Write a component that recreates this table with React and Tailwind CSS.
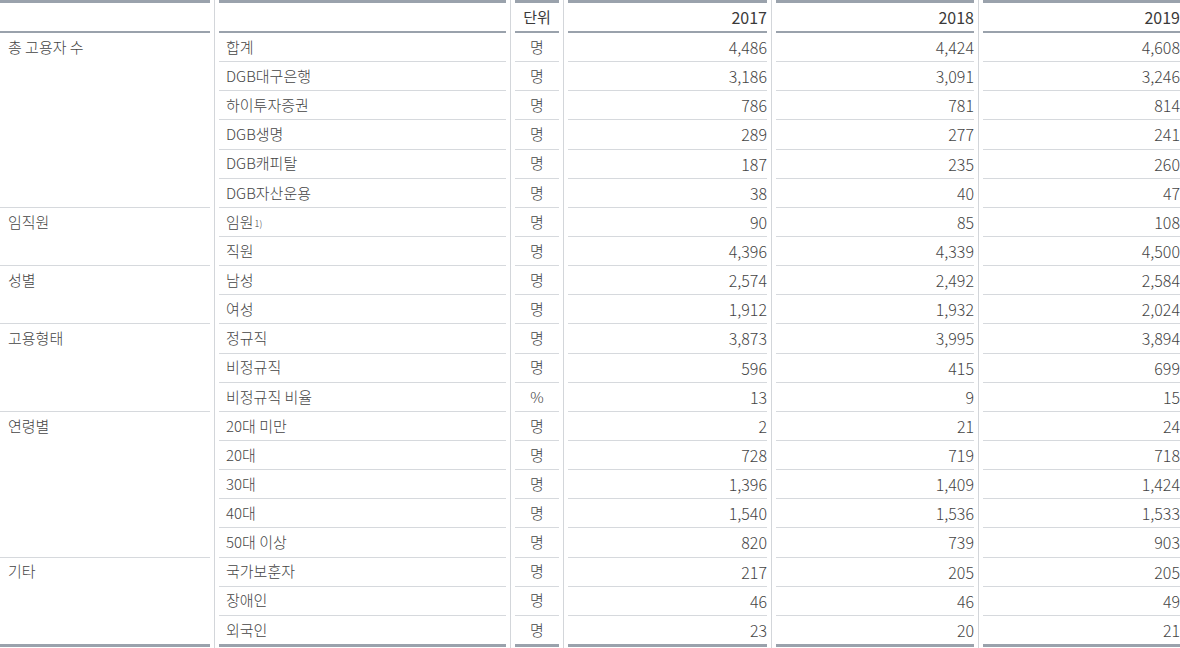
import React from "react";

const groups = [
  { name: "총 고용자 수", rows: ["합계", "DGB대구은행", "하이투자증권", "DGB생명", "DGB캐피탈", "DGB자산운용"] },
  { name: "임직원", rows: ["임원", "직원"] },
  { name: "성별", rows: ["남성", "여성"] },
  { name: "고용형태", rows: ["정규직", "비정규직", "비정규직 비율"] },
  { name: "연령별", rows: ["20대 미만", "20대", "30대", "40대", "50대 이상"] },
  { name: "기타", rows: ["국가보훈자", "장애인", "외국인"] },
];

const units = ["명","명","명","명","명","명","명","명","명","명","명","명","%","명","명","명","명","명","명","명","명"];
const y2017 = ["4,486","3,186","786","289","187","38","90","4,396","2,574","1,912","3,873","596","13","2","728","1,396","1,540","820","217","46","23"];
const y2018 = ["4,424","3,091","781","277","235","40","85","4,339","2,492","1,932","3,995","415","9","21","719","1,409","1,536","739","205","46","20"];
const y2019 = ["4,608","3,246","814","241","260","47","108","4,500","2,584","2,024","3,894","699","15","24","718","1,424","1,533","903","205","49","21"];

const items = groups.flatMap((g) => g.rows);
const ROW = 29.15;

function Sep() {
  return (
    <div className="w-[9px] shrink-0 flex justify-center">
      <div className="w-px h-full bg-[#d3d6da]" />
    </div>
  );
}

function Header({ children, className = "" }) {
  return (
    <div className={"h-[33px] border-t-[3px] border-b-2 border-[#9aa2ac] flex items-center font-normal text-[#3a3a3a] " + className}>
      {children}
    </div>
  );
}

function Col({ width, header, values, align, headerAlign, size = "text-[15px]" }) {
  return (
    <div className={"flex flex-col shrink-0 " + size} style={{ width }}>
      <Header className={headerAlign}>{header}</Header>
      {values.map((v, i) => {
        const last = i === values.length - 1;
        return (
          <div
            key={i}
            className={
              "flex items-center font-light text-[#444] " +
              align +
              (last ? " border-b-[3px] border-[#9aa2ac]" : " border-b border-[#d6d9dd]")
            }
            style={{ height: last ? ROW + 2 : ROW }}
          >
            {v}
          </div>
        );
      })}
    </div>
  );
}

export default function App() {
  return (
    <div
      className="w-[1180px] h-[648px] bg-white flex overflow-hidden"
      style={{ fontFamily: '"Noto Sans CJK KR", "Noto Sans", sans-serif' }}
    >
      <div className="flex flex-col w-[210px] shrink-0 text-[15px]">
        <Header>{""}</Header>
        {groups.map((g, gi) => {
          const last = gi === groups.length - 1;
          return (
            <div
              key={gi}
              className={
                "pl-[8px] font-light text-[#444] " +
                (last ? "border-b-[3px] border-[#9aa2ac]" : "border-b border-[#d6d9dd]")
              }
              style={{ height: g.rows.length * ROW + (last ? 2 : 0) }}
            >
              <div className="flex items-center" style={{ height: ROW - 1 }}>{g.name}</div>
            </div>
          );
        })}
      </div>
      <Sep />
      <Col
        width={287}
        header=""
        align="pl-[7px]"
        values={items.map((t) =>
          t === "임원" ? (
            <span>
              임원<sup className="text-[9px] ml-[1px] relative -top-[1px]">1)</sup>
            </span>
          ) : (
            t
          )
        )}
      />
      <Sep />
      <Col width={44} header="단위" headerAlign="justify-center" align="justify-center" values={units} />
      <Sep />
      <Col width={199} size="text-[16px]" header="2017" headerAlign="justify-end" align="justify-end" values={y2017} />
      <Sep />
      <Col width={198} size="text-[16px]" header="2018" headerAlign="justify-end" align="justify-end" values={y2018} />
      <Sep />
      <Col width={197} size="text-[16px]" header="2019" headerAlign="justify-end" align="justify-end" values={y2019} />
    </div>
  );
}
